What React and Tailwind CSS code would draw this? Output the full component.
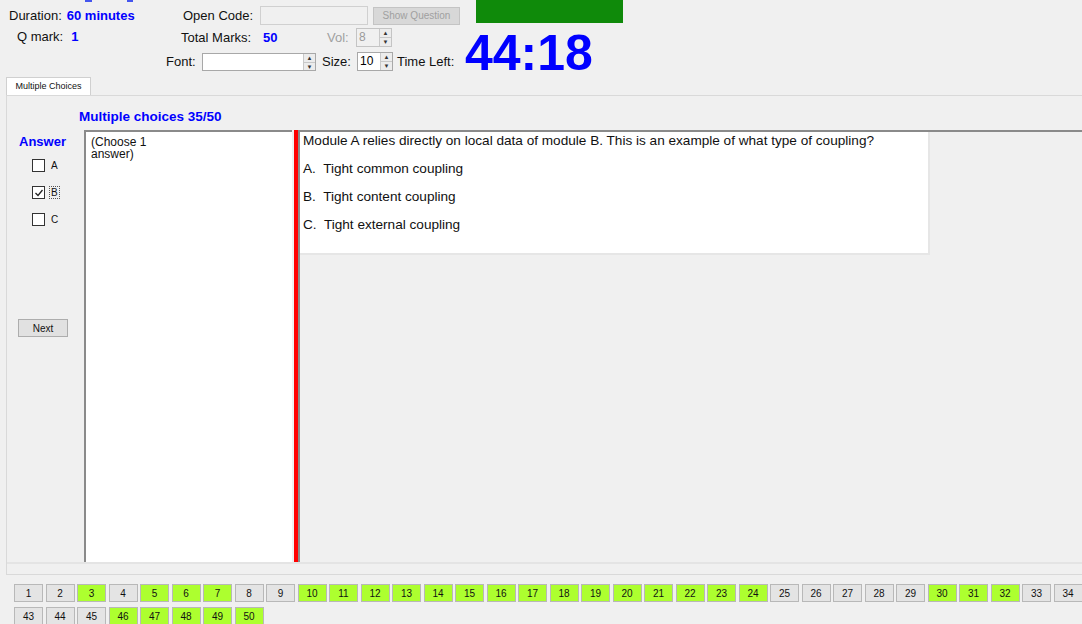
import React from "react";

const green = new Set([3, 5, 6, 7, 10, 11, 12, 13, 14, 15, 16, 17, 18, 19, 20, 21, 22, 23, 24, 30, 31, 32, 35, 36, 38, 39, 40, 41, 46, 47, 48, 49, 50]);

function Spinner({ value, disabled }) {
    return (
        <div className={`flex h-[19px] w-[36px] border ${disabled ? "border-[#c4c4c4] bg-[#f0f0f0] text-[#9a9a9a]" : "border-[#a8a8a8] bg-white text-black"}`}>
            <div className="flex-1 pl-[2px] text-[12px] leading-[17px]">{value}</div>
            <div className="flex w-[12px] flex-col border-l border-[#c8c8c8] bg-[#ececec] text-[6px] leading-[8px] text-center text-[#333]">
                <span className="flex-1 border-b border-[#c8c8c8]">▲</span>
                <span className="flex-1">▼</span>
            </div>
        </div>
    );
}

function Check({ label, checked, focus }) {
    return (
        <div className="flex h-[13px] items-center gap-[4px]">
            <div className="flex h-[13px] w-[13px] items-center justify-center border border-[#333] bg-white">
                {checked && (
                    <svg width="10" height="10" viewBox="0 0 10 10">
                        <path d="M1.5 5 L4 7.5 L8.5 2" fill="none" stroke="#222" strokeWidth="1.3" />
                    </svg>
                )}
            </div>
            <span className={`px-[1px] text-[10px] leading-[11px] ${focus ? "border border-dotted border-[#555]" : "border border-transparent"}`}>{label}</span>
        </div>
    );
}

export default function App() {
    const nums = Array.from({ length: 50 }, (_, i) => i + 1);
    return (
        <div className="relative h-[624px] w-[1082px] overflow-hidden bg-[#f0f0f0] text-[13px] text-[#111]" style={{ fontFamily: '"Liberation Sans", Arial, sans-serif' }}>
            {/* stray blue marks at the top edge */}
            <div className="flex h-0">
                <div className="ml-[85px] h-[2px] w-[7px] bg-[#4455ee]" />
                <div className="ml-[35px] h-[2px] w-[6px] bg-[#4455ee]" />
            </div>

            {/* header */}
            <div className="flex h-[77px]">
                <div className="w-[160px] pt-[7px]">
                    <div className="flex h-[18px] items-center pl-[9px]">
                        <span>Duration:</span>
                        <span className="ml-[5px] font-bold text-[#0000ff]">60 minutes</span>
                    </div>
                    <div className="mt-[3px] flex h-[18px] items-center pl-[17px]">
                        <span>Q mark:</span>
                        <span className="ml-[8px] font-bold text-[#0000ff]">1</span>
                    </div>
                </div>

                <div className="w-[305px] pt-[6px]">
                    <div className="flex h-[19px] items-center">
                        <span className="ml-[23px] w-[77px]">Open Code:</span>
                        <div className="h-[19px] w-[108px] border border-[#d0d0d0] bg-[#f0f0f0]" />
                        <div className="ml-[5px] flex h-[18px] w-[87px] items-center justify-center border border-[#c4c4c4] bg-[#d8d8d8] text-[10px] text-[#a0a0a0]">Show Question</div>
                    </div>
                    <div className="mt-[3px] flex h-[19px] items-center">
                        <span className="ml-[21px] w-[82px]">Total Marks:</span>
                        <span className="w-[64px] font-bold text-[#0000ff]">50</span>
                        <span className="w-[29px] text-[#a0a0a0]">Vol:</span>
                        <Spinner value="8" disabled />
                    </div>
                    <div className="mt-[5px] flex h-[19px] items-center">
                        <span className="ml-[6px] w-[36px]">Font:</span>
                        <div className="flex h-[18px] w-[114px] border border-[#a8a8a8] bg-white">
                            <div className="flex-1" />
                            <div className="flex w-[12px] flex-col border-l border-[#c8c8c8] bg-[#ececec] text-center text-[6px] leading-[8px] text-[#333]">
                                <span className="flex-1 border-b border-[#c8c8c8]">▲</span>
                                <span className="flex-1">▼</span>
                            </div>
                        </div>
                        <span className="ml-[6px] w-[35px]">Size:</span>
                        <Spinner value="10" />
                        <span className="ml-[4px]">Time Left:</span>
                    </div>
                </div>

                <div className="flex flex-col">
                    <div className="ml-[11px] h-[25px] w-[147px] bg-[#0f8a0a]" />
                    <div className="mt-[6px] text-[50px] font-bold leading-[48px] text-[#0000ff]">44:18</div>
                </div>
            </div>

            {/* tab */}
            <div className="ml-[6px] flex h-[18px] w-[85px] items-center justify-center border border-b-0 border-[#d0d0d0] bg-white text-[9px]">Multiple Choices</div>

            {/* panel */}
            <div className="ml-[6px] h-[480px] border border-[#d9d9d9] border-r-0 bg-[#f0f0f0]">
                <div className="flex h-[34px] items-center pl-[72px] pt-[8px] text-[13.5px] font-bold text-[#0000ff]">Multiple choices 35/50</div>
                <div className="flex h-[432px]">
                    <div className="w-[77px]">
                        <div className="pl-[12px] pt-[5px] font-bold leading-[13px] text-[#0000ff]">Answer</div>
                        <div className="mt-[11px] flex flex-col gap-[14px] pl-[25px]">
                            <Check label="A" />
                            <Check label="B" checked focus />
                            <Check label="C" />
                        </div>
                        <div className="ml-[11px] mt-[93px] flex h-[18px] w-[50px] items-center justify-center border border-[#adadad] bg-[#e1e1e1] text-[10px]">Next</div>
                    </div>

                    <div className="w-[208px] border-l-2 border-t-2 border-[#8a8a8a] bg-white px-[5px] pt-[4px] text-[12px] leading-[12px]">
                        (Choose 1<br />answer)
                    </div>
                    <div className="ml-[2px] w-[4px] bg-[#ff0000]" />
                    <div className="w-[2px] bg-[#8a8a8a]" />

                    <div className="flex-1 border-t-2 border-[#8a8a8a]">
                        <div className="h-[123px] w-[630px] border-b-2 border-r-2 border-[#e6e6e6] bg-white pl-[3px] pt-[1px] text-[13.6px]">
                            <div className="leading-[16px]">Module A relies directly on local data of module B. This is an example of what type of coupling?</div>
                            <div className="mt-[12px] leading-[16px]">A.&nbsp; Tight common coupling</div>
                            <div className="mt-[12px] leading-[16px]">B.&nbsp; Tight content coupling</div>
                            <div className="mt-[12px] leading-[16px]">C.&nbsp; Tight external coupling</div>
                        </div>
                    </div>
                </div>
                <div className="h-[2px] bg-[#e4e4e4]" />
            </div>

            {/* question navigator */}
            <div className="mt-[9px] flex w-[1360px] flex-wrap gap-x-[2.5px] gap-y-[5px] pl-[14px]">
                {nums.map((n) => (
                    <div
                        key={n}
                        className={`flex h-[18px] w-[29px] items-center justify-center border text-[10px] ${green.has(n) ? "border-[#b8b8b8] bg-[#adff2f]" : "border-[#b8b8b8] bg-[#e4e4e4]"}`}
                    >
                        {n}
                    </div>
                ))}
            </div>
        </div>
    );
}
